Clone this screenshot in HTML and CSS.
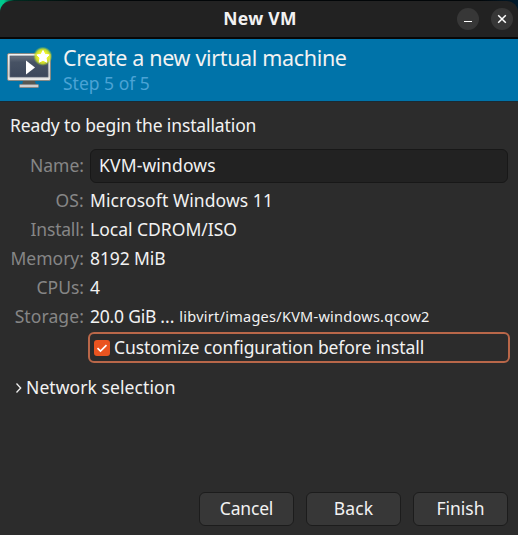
FILE: index.html
```html
<!DOCTYPE html>
<html lang="en">
<head>
<meta charset="utf-8">
<title>New VM</title>
<link rel="stylesheet" href="styles.css">
</head>
<body>
<div class="window">
  <div class="titlebar">
    <h1 class="title">New VM</h1>
    <div class="controls">
      <button class="control" aria-label="Minimize"><svg width="22" height="22" viewBox="0 0 22 22"><path d="M7 13.5h8" stroke="#fff"/></svg></button>
      <button class="control" aria-label="Close"><svg width="22" height="22" viewBox="0 0 22 22"><path d="M7.2 7.2l7.6 7.6M14.8 7.2l-7.6 7.6" stroke="#fff" stroke-width="1.5"/></svg></button>
    </div>
  </div>
  <div class="banner">
    <svg class="logo" width="48" height="48" viewBox="0 0 48 48">
      <defs>
        <linearGradient id="frame" x1="0" y1="0" x2="0" y2="1"><stop offset="0" stop-color="#f4f4f4"/><stop offset=".8" stop-color="#cfcfcf"/><stop offset="1" stop-color="#f0f0f0"/></linearGradient>
        <linearGradient id="screen" x1="0" y1="0" x2="0" y2="1"><stop offset="0" stop-color="#68717e"/><stop offset=".3" stop-color="#475264"/><stop offset="1" stop-color="#3d485c"/></linearGradient>
        <radialGradient id="glow"><stop offset=".5" stop-color="#eef32a"/><stop offset=".75" stop-color="#d5e524" stop-opacity=".85"/><stop offset="1" stop-color="#8dc63f" stop-opacity="0"/></radialGradient>
      </defs>
      <path d="M19 34h12l1 4H18z" fill="#555753"/>
      <rect x="15.5" y="37.500" width="19" height="3" rx=".8" fill="#cfcfcf" stroke="#8a8a88"/>
      <rect x="3.500" y="6.500" width="43" height="27" rx="1.500" fill="url(#frame)" stroke="#888a85"/>
      <rect x="6" y="9" width="38" height="21" fill="url(#screen)" stroke="#566070" stroke-width=".7"/>
      <path d="M22 13.500v14l9-7z" fill="#fff"/>
      <circle cx="38.800" cy="9.300" r="9.700" fill="url(#glow)"/>
      <path d="M39 3.500l1.900 3.800 4.200.600-3.100 3 .8 4.300-3.800-2-3.800 2 .8-4.300-3.100-3 4.200-.600z" fill="#fff" stroke="#fff" stroke-linejoin="round"/>
    </svg>
    <div class="heading">
      <div class="headline">Create a new virtual machine</div>
      <div class="step">Step 5 of 5</div>
    </div>
  </div>
  <div class="content">
    <div class="intro">Ready to begin the installation</div>
    <div class="form">
      <label class="label label-name" for="name">Name:</label>
      <input class="entry" id="name" value="KVM-windows">
      <div class="label label-os">OS:</div><div class="value value-os">Microsoft Windows 11</div>
      <div class="label label-install">Install:</div><div class="value">Local CDROM/ISO</div>
      <div class="label">Memory:</div><div class="value value-memory">8192 MiB</div>
      <div class="label">CPUs:</div><div class="value">4</div>
      <div class="label label-storage">Storage:</div>
      <div class="value storage"><span class="size">20.0 GiB</span><span class="dots">...</span><span class="path">libvirt/images/KVM-windows.qcow2</span></div>
    </div>
    <div class="check">
      <span class="box"><svg width="16" height="16" viewBox="0 0 16 16"><path d="M3.500 8.200l3 2.900 6-5.900" fill="none" stroke="#fff" stroke-width="1.700"/></svg></span>
      <span class="check-text">Customize configuration before install</span>
    </div>
    <div class="expander">
      <svg width="8" height="12" viewBox="0 0 8 12"><path d="M1.500 1.500L5.700 6 1.500 10.500" fill="none" stroke="#f0f0f0" stroke-width="1.300"/></svg>
      <span class="expander-text">Network selection</span>
    </div>
  </div>
  <div class="actions">
    <button class="button cancel">Cancel</button>
    <button class="button back">Back</button>
    <button class="button">Finish</button>
  </div>
</div>
</body>
</html>
```
FILE: styles.css
```css
* { box-sizing: border-box; }

body {
  margin: 0;
  background: linear-gradient(90deg, #00c98d 0, #00c98d 4px, #002b20 14px, #020608 80px, #020608 480px, #001a2c 518px);
}

.window {
  display: flex;
  flex-direction: column;
  height: 535px;
  padding-top: 1px;
  color: #f2f2f2;
  font: 17.5px/29px "Noto Sans", sans-serif;
}

input, button { font: inherit; color: inherit; }

.titlebar {
  display: grid;
  grid-template-columns: 1fr auto 1fr;
  align-items: center;
  height: 38px;
  background: #222;
  border-bottom: 2px solid #070707;
  border-radius: 11px 11px 0 0;
}

.title {
  grid-column: 2;
  margin: 0;
  padding: 0 0 2px 2px;
  font-size: 17.5px;
  font-weight: 700;
  line-height: 32px;
  letter-spacing: .3px;
}

.controls { display: flex; justify-content: flex-end; gap: 12px; padding-right: 5px; }

.control {
  display: block;
  width: 22px;
  height: 22px;
  padding: 0;
  border: 0;
  border-radius: 50%;
  background: #373737;
}

.control svg { display: block; }

.banner {
  display: flex;
  height: 63px;
  padding: 5px 4px;
  background: #0073a9;
  border-bottom: 1px solid #1b2a33;
}

.logo { margin-top: 3px; }
.heading { padding-left: 11px; white-space: nowrap; }
.headline { font-size: 21.5px; line-height: 28px; letter-spacing: -.34px; }
.step { color: #4ba3d5; line-height: 22px; }

.content { flex: 1; padding: 9px 10px 0; background: #2c2c2c; }
.intro { letter-spacing: -.12px; }

.form {
  display: grid;
  grid-template-columns: 74px 1fr;
  grid-template-rows: 34px;
  grid-auto-rows: 29px;
  column-gap: 6px;
  margin-top: 9px;
}

.label { color: #868686; text-align: right; white-space: nowrap; }
.label-name { line-height: 32px; }
.label-install { letter-spacing: -.2px; }
.label-os { letter-spacing: .2px; }
.label-storage { letter-spacing: .1px; }
.label:not(.label-name), .value { padding-top: 3px; }

.entry {
  width: 100%;
  min-width: 0;
  height: 34px;
  padding: 0 8px 2px;
  border: 1px solid #181818;
  border-radius: 6px;
  background: #222;
  letter-spacing: .15px;
  outline: 0;
}

.value-os { letter-spacing: .08px; }
.value-memory { letter-spacing: -.12px; }
.storage { display: flex; white-space: nowrap; }
.size { letter-spacing: -.2px; }
.dots { width: 19px; margin-left: 4px; }
.path { font-size: 14.5px; letter-spacing: .26px; }

.check {
  display: flex;
  align-items: center;
  gap: 4px;
  height: 31px;
  margin: 4px -2px 0 78px;
  padding-left: 4px;
  border: 2px solid #b96749;
  border-radius: 6px;
  line-height: 27px;
}

.box { width: 16px; height: 16px; border-radius: 3px; background: #e95420; }
.box svg { display: block; }
.check-text { letter-spacing: -.09px; }

.expander { display: flex; align-items: center; gap: 3px; margin-top: 10px; padding-left: 5px; }
.expander-text { letter-spacing: .08px; }

.actions {
  display: flex;
  justify-content: flex-end;
  gap: 12px;
  padding: 0 10px 9px;
  background: #2c2c2c;
}

.button {
  width: 95px;
  height: 34px;
  padding: 0 0 2px;
  border: 1px solid #1c1c1c;
  border-radius: 6px;
  background: #373737;
  line-height: 30px;
}

.cancel { letter-spacing: -.18px; }
.back { letter-spacing: .1px; }
```
